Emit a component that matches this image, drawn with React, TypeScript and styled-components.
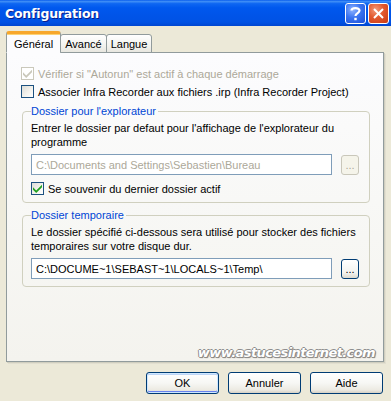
import React from 'react';
import { styled, createGlobalStyle } from 'styled-components';

const GlobalStyle = createGlobalStyle`
  html, body {
    margin: 0;
    padding: 0;
    background: #ece9d8;
  }
  body {
    font-family: 'Liberation Sans', Arial, sans-serif;
    font-size: 11px;
    color: #000;
  }
`;

const Window = styled.div`
  width: 391px;
  height: 401px;
  display: flex;
  flex-direction: column;
  background: #ece9d8;
  overflow: hidden;
`;

const TitleBar = styled.div`
  height: 26px;
  flex-shrink: 0;
  display: flex;
  align-items: center;
  justify-content: space-between;
  padding: 0 2px 0 5px;
  box-sizing: border-box;
  background: linear-gradient(
    to bottom,
    #0a5ded 0%,
    #3e8df6 6%,
    #0e66f2 14%,
    #0058ee 30%,
    #0054e8 60%,
    #0052e4 85%,
    #0046d0 100%
  );
`;

const Title = styled.span`
  font-family: 'DejaVu Sans', 'Liberation Sans', sans-serif;
  font-weight: bold;
  font-size: 12.5px;
  color: #fff;
  text-shadow: 1px 1px 0 #0a1e8c;
  letter-spacing: -0.2px;
`;

const Controls = styled.div`
  display: flex;
  gap: 2px;
`;

const CaptionButton = styled.div<{ $kind: 'help' | 'close' }>`
  width: 21px;
  height: 21px;
  box-sizing: border-box;
  border: 1px solid #fff;
  border-radius: 3px;
  display: flex;
  align-items: center;
  justify-content: center;
  background: ${(p) =>
    p.$kind === 'close'
      ? 'radial-gradient(circle at 35% 30%, #f39a7a 0%, #e2582e 45%, #c83a12 100%)'
      : 'radial-gradient(circle at 35% 30%, #8fb4ff 0%, #3a74f0 45%, #1d4fd8 100%)'};
`;

const Body = styled.div`
  flex: 1;
  display: flex;
  flex-direction: column;
  padding: 6px 7px 7px 6px;
`;

const TabStrip = styled.div`
  display: flex;
  align-items: flex-end;
  height: 21px;
  position: relative;
  z-index: 1;
  margin-bottom: -1px;
`;

const Tab = styled.div<{ $active?: boolean }>`
  box-sizing: border-box;
  height: ${(p) => (p.$active ? '22px' : '19px')};
  padding: ${(p) => (p.$active ? '3px 7px 0 7px' : '2px 4px 0 4px')};
  border: 1px solid #919b9c;
  border-bottom: ${(p) => (p.$active ? '1px solid #fcfcfe' : '1px solid #919b9c')};
  border-radius: 3px 3px 0 0;
  background: ${(p) =>
    p.$active ? '#fcfcfe' : 'linear-gradient(to bottom, #fff 0%, #f3f3ef 60%, #e8e7e0 100%)'};
  border-top: ${(p) => (p.$active ? '3px solid #f7a72c' : '1px solid #919b9c')};
  margin-left: ${(p) => (p.$active ? '0' : '-1px')};
  font-size: 11px;
  line-height: 14px;
  white-space: nowrap;
  ${(p) => (p.$active ? 'box-shadow: inset 0 1px 0 #fcd275;' : '')}
`;

const Panel = styled.div`
  flex: 1;
  display: flex;
  flex-direction: column;
  border: 1px solid #919b9c;
  background: linear-gradient(to bottom, #fcfcfe 0%, #f7f7f4 60%, #f4f3ee 100%);
  box-shadow: 1px 1px 0 #d0cebf, 2px 2px 0 #e2dfd0;
  padding: 14px 13px 1px 14px;
`;

const CheckRow = styled.label<{ $disabled?: boolean; $mt?: number }>`
  display: flex;
  align-items: center;
  gap: 4px;
  height: 13px;
  margin: ${(p) => (p.$mt !== undefined ? `${p.$mt}px 0 0 0` : '0 0 5px 0')};
  font-size: 11px;
  color: ${(p) => (p.$disabled ? '#aca899' : '#000')};
  white-space: nowrap;
`;

const Box = styled.span<{ $disabled?: boolean }>`
  width: 13px;
  height: 13px;
  box-sizing: border-box;
  flex-shrink: 0;
  display: flex;
  align-items: center;
  justify-content: center;
  border: 1px solid ${(p) => (p.$disabled ? '#cac8bb' : '#1c5180')};
  background: ${(p) =>
    p.$disabled ? '#fff' : 'linear-gradient(135deg, #dcdcd7 0%, #f5f4ef 60%, #fff 100%)'};
`;

const Group = styled.fieldset<{ $top: number }>`
  margin: ${(p) => p.$top}px 0 0 1px;
  padding: 1px 10px 7px 8px;
  border: 1px solid #d0d0bf;
  border-radius: 4px;
  min-width: 0;
`;

const Legend = styled.legend`
  padding: 0 2px 0 0;
  color: #0046d5;
  font-size: 11px;
  line-height: 13px;
`;

const Info = styled.p`
  margin: 2px 0 0 0;
  font-size: 11px;
  line-height: 14px;
`;

const PathRow = styled.div<{ $mt: number }>`
  display: flex;
  align-items: center;
  gap: 9px;
  margin-top: ${(p) => p.$mt}px;
`;

const PathInput = styled.div<{ $disabled?: boolean }>`
  width: 302px;
  height: 21px;
  box-sizing: border-box;
  border: 1px solid #7f9db9;
  background: #fff;
  color: ${(p) => (p.$disabled ? '#aca899' : '#000')};
  padding: 0 4px;
  display: flex;
  align-items: center;
  font-size: 11px;
  white-space: nowrap;
  overflow: hidden;
`;

const BrowseButton = styled.div<{ $disabled?: boolean }>`
  width: 18px;
  height: 20px;
  box-sizing: border-box;
  border: 1px solid ${(p) => (p.$disabled ? '#c9c7ba' : '#003c74')};
  border-radius: 3px;
  background: ${(p) =>
    p.$disabled ? '#f5f4ea' : 'linear-gradient(to bottom, #fff 0%, #f3f3ef 70%, #dcd9cf 100%)'};
  color: ${(p) => (p.$disabled ? '#aca899' : '#000')};
  display: flex;
  align-items: flex-end;
  justify-content: center;
  padding-bottom: 4px;
  font-size: 11px;
  line-height: 10px;
`;

const Watermark = styled.div`
  margin-top: auto;
  align-self: flex-end;
  font-family: 'DejaVu Sans', 'Liberation Sans', sans-serif;
  font-weight: bold;
  font-style: italic;
  font-size: 13px;
  letter-spacing: -0.6px;
  color: #fff;
  text-shadow: -1px 0 0 #8e8e8e, 1px 0 0 #8e8e8e, 0 -1px 0 #8e8e8e, 0 1px 0 #8e8e8e,
    1px 1px 1px #6f6f6f;
  margin-right: -5px;
  line-height: 14px;
`;

const ButtonBar = styled.div`
  display: flex;
  justify-content: flex-end;
  gap: 9px;
  margin-top: 10px;
  padding-right: 1px;
`;

const Button = styled.div<{ $default?: boolean }>`
  width: 73px;
  height: 22px;
  box-sizing: border-box;
  border: 1px solid #003c74;
  border-radius: 3px;
  background: linear-gradient(to bottom, #fff 0%, #f7f7f4 50%, #eceae2 85%, #d6d0c5 100%);
  display: flex;
  align-items: center;
  justify-content: center;
  font-size: 11px;
  box-shadow: ${(p) =>
    p.$default ? 'inset 0 0 0 1px #cee7ff, inset 0 -1px 0 1px #6982ee, inset 0 1px 0 1px #bcd4f6' : 'none'};
`;

const Check = ({ color }: { color: string }) => (
  <svg width="9" height="9" viewBox="0 0 7 7">
    <path d="M0 2.5 L2.5 5 L7 0.5 L7 2.5 L2.5 7 L0 4.5 Z" fill={color} />
  </svg>
);

export default function App() {
  return (
    <Window>
      <GlobalStyle />
      <TitleBar>
        <Title>Configuration</Title>
        <Controls>
          <CaptionButton $kind="help">
            <svg width="13" height="15" viewBox="0 0 13 15">
              <path
                d="M2.5 4.5 C2.5 1.5 10.5 1.2 10.5 4.6 C10.5 7 6.5 7.2 6.5 10"
                stroke="#fff"
                strokeWidth="2.2"
                fill="none"
              />
              <rect x="5.3" y="11.8" width="2.4" height="2.4" fill="#fff" />
            </svg>
          </CaptionButton>
          <CaptionButton $kind="close">
            <svg width="13" height="13" viewBox="0 0 13 13">
              <path d="M2 2 L11 11 M11 2 L2 11" stroke="#fff" strokeWidth="2" />
            </svg>
          </CaptionButton>
        </Controls>
      </TitleBar>
      <Body>
        <TabStrip>
          <Tab $active>Général</Tab>
          <Tab>Avancé</Tab>
          <Tab>Langue</Tab>
        </TabStrip>
        <Panel>
          <CheckRow $disabled>
            <Box $disabled>
              <Check color="#cac8bb" />
            </Box>
            Vérifier si "Autorun" est actif à chaque démarrage
          </CheckRow>
          <CheckRow>
            <Box />
            Associer Infra Recorder aux fichiers .irp (Infra Recorder Project)
          </CheckRow>
          <Group $top={2}>
            <Legend>Dossier pour l'explorateur</Legend>
            <Info>Entrer le dossier par defaut pour l'affichage de l'explorateur du programme</Info>
            <PathRow $mt={5}>
              <PathInput $disabled>C:\Documents and Settings\Sebastien\Bureau</PathInput>
              <BrowseButton $disabled>...</BrowseButton>
            </PathRow>
            <CheckRow $mt={7}>
              <Box>
                <Check color="#21a121" />
              </Box>
              Se souvenir du dernier dossier actif
            </CheckRow>
          </Group>
          <Group $top={6}>
            <Legend>Dossier temporaire</Legend>
            <Info>
              Le dossier spécifié ci-dessous sera utilisé pour stocker des fichiers temporaires sur
              votre disque dur.
            </Info>
            <PathRow $mt={5}>
              <PathInput>C:\DOCUME~1\SEBAST~1\LOCALS~1\Temp\</PathInput>
              <BrowseButton>...</BrowseButton>
            </PathRow>
          </Group>
          <Watermark>www.astucesinternet.com</Watermark>
        </Panel>
        <ButtonBar>
          <Button $default>OK</Button>
          <Button>Annuler</Button>
          <Button>Aide</Button>
        </ButtonBar>
      </Body>
    </Window>
  );
}
